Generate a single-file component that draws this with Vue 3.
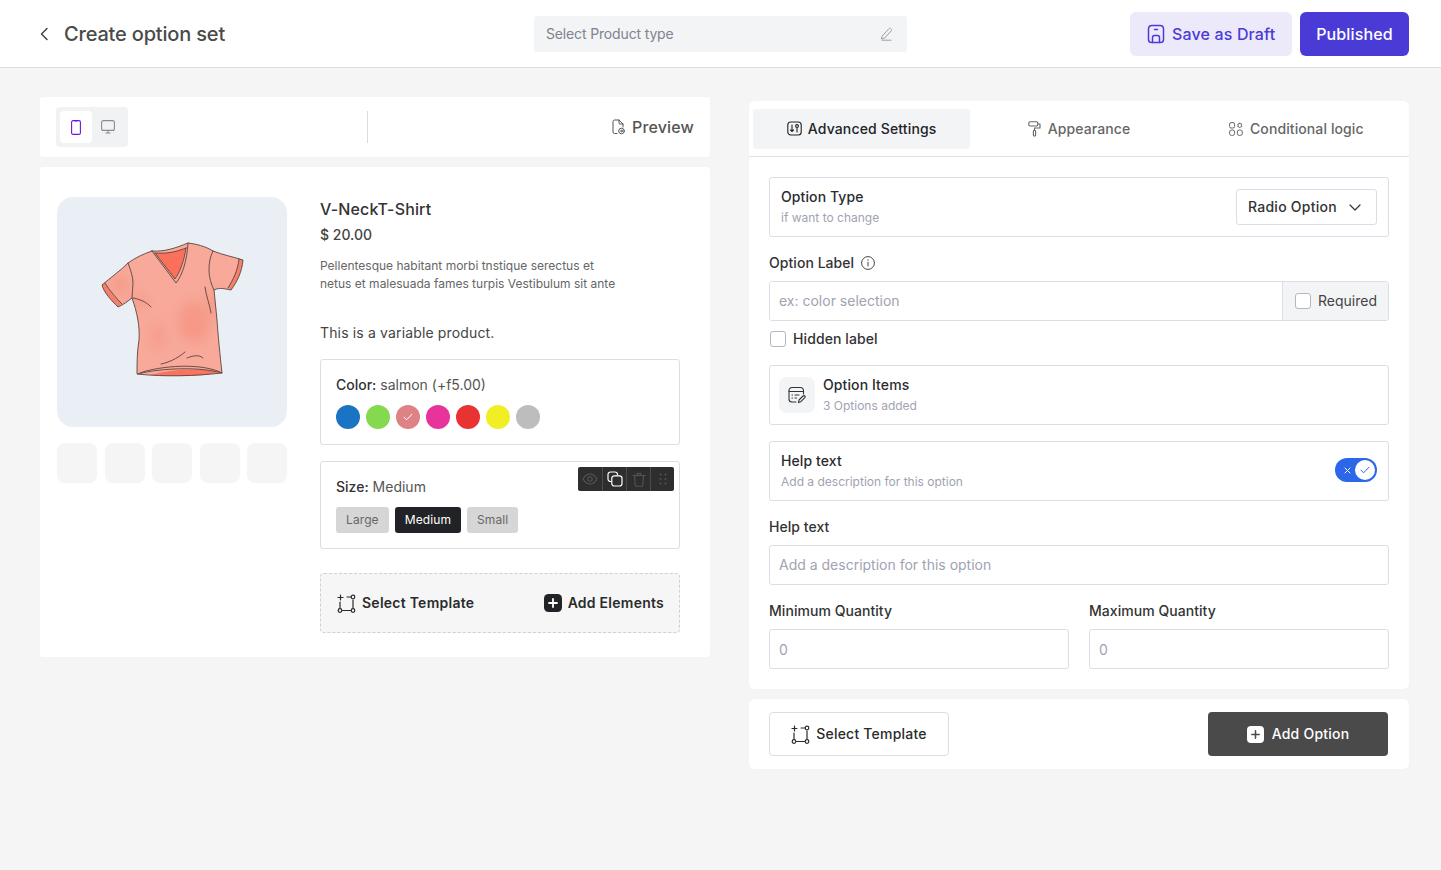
<script setup>
const swatches = [
  { color: '#1b73c4' },
  { color: '#85d94f' },
  { color: '#df8286', selected: true },
  { color: '#e8349a' },
  { color: '#e93232' },
  { color: '#f2ee26' },
  { color: '#bdbdbd' }
]
const sizes = [
  { name: 'Large' },
  { name: 'Medium', active: true },
  { name: 'Small' }
]
const thumbs = [1, 2, 3, 4, 5]
const shirtPath = 'M62 21C53 24 45 28 38 33 30 41 20 48 12 55c2 8 10 16 16 22 5-2 10-6 14-9 5 14 8 28 7 42-2 12-2 23-2 34 28 3 58 2 85-1-2-18-4-38-5-53-1-10-2-20-3-30 6-3 11-1 17 0 6-8 11-18 12-30-9-3-20-5-30-9-8-5-17-7-25-8-12 5-24 9-36 8z'
</script>

<template>
  <div class="page">
    <header class="topbar">
      <div class="title-wrap">
        <svg class="back" width="10" height="14" viewBox="0 0 10 14" fill="none"><path d="M8 1.5 2.5 7 8 12.5" stroke="#444" stroke-width="1.5" stroke-linecap="round" stroke-linejoin="round"/></svg>
        <h1 class="title">Create option set</h1>
      </div>
      <div class="product-type">
        <span>Select Product type</span>
        <svg width="14" height="14" viewBox="0 0 14 14" fill="none" stroke="#9a9cab" stroke-width="1" stroke-linecap="round" stroke-linejoin="round"><path d="M2.2 9.2 9 1.6c.5-.5 1.2-.5 1.700 0l.6.6c.5.5.5 1.100 0 1.600L4.500 11.200l-2.700.6z"/><path d="M2 13.200h9"/></svg>
      </div>
      <div class="top-actions">
        <button class="btn-draft">
          <svg width="18" height="20" viewBox="0 0 18 20" fill="none" stroke="#4b3bd6" stroke-width="1.5" stroke-linecap="round" stroke-linejoin="round"><path d="M5 1.500h8c2 0 3.500 1.500 3.500 3.500v10.500c0 1.700-1.300 3-3 3h-9c-1.700 0-3-1.300-3-3V5c0-2 1.500-3.500 3.500-3.500z"/><path d="M7.500 5.500h3"/><path d="M5.500 18.500v-5c0-1 .8-2 2-2h3c1.200 0 2 1 2 2v5"/></svg>
          Save as Draft
        </button>
        <button class="btn-publish">Published</button>
      </div>
    </header>

    <main class="workspace">
      <section class="left">
        <div class="toolbar">
          <div class="device-half">
            <div class="devices">
              <span class="device active">
                <svg width="10" height="15" viewBox="0 0 10 15" fill="none"><rect x=".6" y=".6" width="8.800" height="13.800" rx="1.500" stroke="#6a14e0" stroke-width="1.100"/><path d="M3.800 1h2.400" stroke="#6a14e0" stroke-width="1"/></svg>
              </span>
              <span class="device">
                <svg width="14" height="14" viewBox="0 0 14 14" fill="none" stroke="#8b8b8b" stroke-width="1.100"><rect x=".6" y=".6" width="12.800" height="9.800" rx="2"/><path d="M7 10.500v2.500M4.500 13h5"/></svg>
              </span>
            </div>
          </div>
          <div class="preview">
            <svg width="15" height="16" viewBox="0 0 15 16" fill="none" stroke="#555" stroke-width="1" stroke-linecap="round" stroke-linejoin="round"><path d="M6 14.500H3.500A1.500 1.500 0 0 1 2 13V2.500A1.500 1.500 0 0 1 3.500 1H8l4 4v3"/><path d="M8 1v3a1 1 0 0 0 1 1h3"/><circle cx="10.500" cy="12" r="2.800"/><circle cx="10.500" cy="12" r=".8"/></svg>
            Preview
          </div>
        </div>

        <div class="product-card">
          <div class="gallery">
            <div class="main-image">
              <svg class="shirt" width="165" height="160" viewBox="0 0 165 160">
                <defs>
                  <filter id="soft" x="-60%" y="-60%" width="220%" height="220%"><feGaussianBlur stdDeviation="6"/></filter>
                  <clipPath id="body-clip"><path :d="shirtPath"/></clipPath>
                </defs>
                <path :d="shirtPath" fill="#f8a999"/>
                <g clip-path="url(#body-clip)">
                  <g filter="url(#soft)" fill="#f48a79" opacity=".55">
                    <ellipse cx="104" cy="92" rx="15" ry="20"/>
                    <ellipse cx="68" cy="106" rx="5" ry="12"/>
                    <ellipse cx="124" cy="72" rx="5" ry="14"/>
                    <ellipse cx="48" cy="72" rx="8" ry="6"/>
                    <ellipse cx="30" cy="55" rx="8" ry="8"/>
                  </g>
                  <path d="M12 55c2 8 10 16 16 22l4-3c-7-6-13-14-17-21z" fill="#f47f6b"/>
                  <path d="M153 30c-1 12-6 22-12 30l-3-2c5-8 10-18 11-29z" fill="#f47f6b"/>
                </g>
                <path d="M65 23c11 1 21-1 31-5l-5 20-6 11z" fill="#fb705a"/>
                <path d="M60 145c24-6 48-7 70-3-13 3-24 4-36 4-12 0-23 0-34-1z" fill="#f7745e"/>
                <g fill="none" stroke="#5a4440" stroke-width=".9" stroke-linecap="round" stroke-linejoin="round">
                  <path :d="shirtPath"/>
                  <path d="M62 21 86 53c6-7 11-22 12-40M65 23l20 26c5-7 9-18 11-31M65 23c11 1 21-1 31-5"/>
                  <path d="M38 33c3 8 5 14 5 20 0 5-1 10-1 15M15 53c5 8 11 15 17 21M123 21c-3 6-4 12-4 19 0 7 2 14 5 20M149 29c-1 11-6 21-11 29"/>
                  <path d="M43 68c6 1 14 4 18 9M115 57c1 9 5 18 6 26M71 134c6-1 16-5 24-12M97 128c5-2 12-4 16 0M48 144c12-4 56-9 84-1M50 143c12-5 55-12 80-1"/>
                </g>
              </svg>
            </div>
            <div class="thumbs">
              <span v-for="t in thumbs" :key="t" class="thumb"></span>
            </div>
          </div>

          <div class="details">
            <h2 class="product-name">V-NeckT-Shirt</h2>
            <p class="price">$ 20.00</p>
            <p class="desc">Pellentesque habitant morbi tnstique serectus et<br>netus et malesuada fames turpis Vestibulum sit ante</p>
            <p class="variable">This is a variable product.</p>

            <div class="option-box color-box">
              <p class="option-title"><b>Color:</b> salmon (+f5.00)</p>
              <div class="swatches">
                <span v-for="s in swatches" :key="s.color" class="swatch" :style="{ background: s.color }">
                  <svg v-if="s.selected" width="10" height="8" viewBox="0 0 10 8" fill="none"><path d="M1 4.200 3.600 6.800 9 1.200" stroke="#fff" stroke-width="1" stroke-linecap="round" stroke-linejoin="round"/></svg>
                </span>
              </div>
            </div>

            <div class="option-box size-box">
              <div class="float-tools">
                <span class="tool">
                  <svg width="16" height="12" viewBox="0 0 16 12" fill="none" stroke="#555" stroke-width="1.100"><path d="M1 6c2-3.400 4.400-5 7-5s5 1.600 7 5c-2 3.400-4.400 5-7 5S3 9.400 1 6z"/><circle cx="8" cy="6" r="2.200"/></svg>
                </span>
                <span class="tool">
                  <svg width="16" height="16" viewBox="0 0 16 16" fill="none" stroke="#fff" stroke-width="1.200"><path d="M10.500 4.500V3.500a2.500 2.500 0 0 0-2.500-2.500H3.500A2.500 2.500 0 0 0 1 3.500V8a2.500 2.500 0 0 0 2.500 2.500h1"/><rect x="4.800" y="4.800" width="10.200" height="10.200" rx="2.500"/></svg>
                </span>
                <span class="tool">
                  <svg width="14" height="15" viewBox="0 0 14 15" fill="none" stroke="#555" stroke-width="1.100" stroke-linecap="round" stroke-linejoin="round"><path d="M1 3.500h12M5 3.500V1.500h4v2M2.500 3.500l.7 9.500c0 .8.600 1.200 1.300 1.200h5c.7 0 1.300-.4 1.300-1.200l.7-9.500"/></svg>
                </span>
                <span class="tool">
                  <svg width="8" height="12" viewBox="0 0 8 12" fill="#555"><circle cx="1.500" cy="1.500" r="1"/><circle cx="6.500" cy="1.500" r="1"/><circle cx="1.500" cy="6" r="1"/><circle cx="6.500" cy="6" r="1"/><circle cx="1.500" cy="10.500" r="1"/><circle cx="6.500" cy="10.500" r="1"/></svg>
                </span>
              </div>
              <p class="option-title"><b>Size:</b> Medium</p>
              <div class="chips">
                <span v-for="c in sizes" :key="c.name" class="chip" :class="{ active: c.active }">{{ c.name }}</span>
              </div>
            </div>

            <div class="dashed">
              <span class="dash-item">
                <svg width="19" height="19" viewBox="0 0 19 19" fill="none" stroke="#2b2b2b" stroke-width="1.200" stroke-linecap="round"><path d="M1 3.500h5M3.500 1v5M3 8v6M5.500 16.500h8.500M16 6v8M10 3h4"/><circle cx="16" cy="3" r="1.800"/><circle cx="3" cy="16.500" r="1.800"/><circle cx="16" cy="16.500" r="1.800"/></svg>
                <span class="nudge">Select Template</span>
              </span>
              <span class="dash-item">
                <svg width="18" height="18" viewBox="0 0 18 18"><rect width="18" height="18" rx="4.500" fill="#222326"/><path d="M9 5v8M5 9h8" stroke="#fff" stroke-width="1.800" stroke-linecap="round"/></svg>
                <span class="nudge">Add Elements</span>
              </span>
            </div>
          </div>
        </div>
      </section>

      <section class="right">
        <div class="settings-card">
          <nav class="tabs">
            <div class="tab active">
              <svg width="15" height="15" viewBox="0 0 15 15" fill="none" stroke="#222" stroke-width="1.100" stroke-linecap="round"><rect x=".8" y="1" width="13.400" height="13" rx="3"/><path d="M5 4v6.500M3.500 9l1.500 1.500L6.500 9"/><path d="M10 11V7"/><circle cx="10" cy="5" r="1.400"/></svg>
              Advanced Settings
            </div>
            <div class="tab">
              <svg width="13" height="16" viewBox="0 0 13 16" fill="none" stroke="#666" stroke-width="1.100" stroke-linejoin="round"><rect x=".8" y=".8" width="9" height="4.200" rx="1.200"/><path d="M9.800 3H12v4H6.500v2.500"/><rect x="5.400" y="9.500" width="2.200" height="5.500" rx=".8"/></svg>
              Appearance
            </div>
            <div class="tab">
              <svg width="14" height="14" viewBox="0 0 14 14" fill="none" stroke="#666" stroke-width="1"><rect x=".6" y=".6" width="5" height="5.400" rx="1.500"/><path d="M10.800.8l.7 1.200 1.300.1-.4 1.300.5 1.200-1.300.2-.8 1-.8-1-1.300-.2.500-1.200-.4-1.300 1.300-.1z"/><rect x=".6" y="8" width="5" height="5.400" rx="2"/><rect x="8.300" y="8" width="5" height="5.400" rx="2"/></svg>
              Conditional logic
            </div>
          </nav>

          <div class="form">
            <div class="row-box type-box">
              <div class="row-text">
                <p class="row-title">Option Type</p>
                <p class="row-sub">if want to change</p>
              </div>
              <div class="select">
                <span class="nudge">Radio Option</span>
                <svg width="12" height="7" viewBox="0 0 12 7" fill="none"><path d="M1 1l5 5 5-5" stroke="#333" stroke-width="1.200" stroke-linecap="round" stroke-linejoin="round"/></svg>
              </div>
            </div>

            <label class="field-label label-first">
              Option Label
              <svg width="14" height="14" viewBox="0 0 14 14" fill="none" stroke="#444" stroke-width="1"><circle cx="7" cy="7" r="6.400"/><path d="M7 6.200V10" stroke-linecap="round"/><circle cx="7" cy="4" r=".7" fill="#444" stroke="none"/></svg>
            </label>
            <div class="label-input">
              <input class="plain-input" placeholder="ex: color selection">
              <div class="required"><span class="check"></span><span class="nudge">Required</span></div>
            </div>
            <div class="hidden-label"><span class="check"></span><span class="nudge">Hidden label</span></div>

            <div class="row-box items-box">
              <span class="items-icon">
                <svg width="18" height="18" viewBox="0 0 18 18" fill="none" stroke="#333" stroke-width="1.100" stroke-linecap="round" stroke-linejoin="round"><path d="M8 16H4a3 3 0 0 1-3-3V4.500a3 3 0 0 1 3-3h8.500a3 3 0 0 1 3 3V8"/><path d="M1 5.500h14.500M4 9h.5M7 9h4M4 12h.5M7 12h1.500"/><path d="M10.500 16.500l.5-2.500 4-4c.6-.5 1.300-.5 1.800 0s.5 1.200 0 1.700l-4 4z"/></svg>
              </span>
              <div class="row-text">
                <p class="row-title">Option Items</p>
                <p class="row-sub">3 Options added</p>
              </div>
            </div>

            <div class="row-box help-box">
              <div class="row-text">
                <p class="row-title">Help text</p>
                <p class="row-sub">Add a description for this option</p>
              </div>
              <span class="toggle">
                <svg class="toggle-x" width="7" height="7" viewBox="0 0 7 7" fill="none"><path d="M1 1l5 5M6 1 1 6" stroke="#fff" stroke-width="1" stroke-linecap="round"/></svg>
                <span class="knob">
                  <svg width="10" height="8" viewBox="0 0 10 8" fill="none"><path d="M1 4.200 3.600 6.800 9 1.200" stroke="#2b67e8" stroke-width="1" stroke-linecap="round" stroke-linejoin="round"/></svg>
                </span>
              </span>
            </div>

            <label class="field-label label-help">Help text</label>
            <input class="text-input" placeholder="Add a description for this option">

            <div class="qty-grid">
              <div>
                <label class="field-label">Minimum Quantity</label>
                <input class="text-input qty-input" placeholder="0">
              </div>
              <div>
                <label class="field-label">Maximum Quantity</label>
                <input class="text-input qty-input" placeholder="0">
              </div>
            </div>
          </div>
        </div>

        <div class="footer-card">
          <button class="btn-template">
            <svg width="19" height="19" viewBox="0 0 19 19" fill="none" stroke="#2b2b2b" stroke-width="1.200" stroke-linecap="round"><path d="M1 3.500h5M3.500 1v5M3 8v6M5.500 16.500h8.500M16 6v8M10 3h4"/><circle cx="16" cy="3" r="1.800"/><circle cx="3" cy="16.500" r="1.800"/><circle cx="16" cy="16.500" r="1.800"/></svg>
            <span class="nudge">Select Template</span>
          </button>
          <button class="btn-add">
            <svg width="17" height="17" viewBox="0 0 17 17"><rect width="17" height="17" rx="4" fill="#fff"/><path d="M8.500 4.800v7.400M4.800 8.500h7.400" stroke="#4a4a4a" stroke-width="1.500" stroke-linecap="round"/></svg>
            <span class="nudge">Add Option</span>
          </button>
        </div>
      </section>
    </main>
  </div>
</template>

<style scoped>
* { box-sizing: border-box; }
p, h1, h2 { margin: 0; font-weight: inherit; }
button { font-family: inherit; border: 0; cursor: pointer; }

.page {
  min-height: 870px;
  background: #f5f5f6;
  font-family: Inter, "Liberation Sans", sans-serif;
  color: #222326;
}

.topbar {
  height: 68px;
  background: #fff;
  border-bottom: 1px solid #dcdde2;
  display: grid;
  grid-template-columns: 534px 373px 1fr;
  align-items: center;
  padding-right: 32px;
}
.title-wrap { display: flex; align-items: center; padding-left: 39px; gap: 15px; }
.back { flex: none; }
.title { font-size: 20px; font-weight: 500; color: #4a4a4a; line-height: 24px; letter-spacing: -.18px; }
.product-type {
  height: 36px;
  background: #f3f4f5;
  border-radius: 3px;
  padding: 0 13px 0 12px;
  display: flex;
  align-items: center;
  justify-content: space-between;
  font-size: 14px;
  color: #80838f;
  letter-spacing: -.15px;
}
.top-actions { display: flex; justify-content: flex-end; gap: 8px; }
.btn-draft, .btn-publish {
  height: 44px;
  border-radius: 6px;
  font-size: 16px;
  font-weight: 500;
  display: flex;
  align-items: center;
  letter-spacing: .15px;
}
.btn-draft { width: 162px; background: #ece9fb; color: #4b3bd6; gap: 7px; padding-left: 17px; }
.btn-publish { width: 109px; background: #4b3bd6; color: #fff; justify-content: center; }

.workspace {
  display: grid;
  grid-template-columns: 670px 660px;
  column-gap: 39px;
  padding: 29px 32px 0 40px;
}

.toolbar {
  height: 60px;
  background: #fff;
  border-radius: 3px;
  display: flex;
  align-items: center;
  padding: 0 16px 0 16px;
}
.device-half {
  width: 312px;
  height: 32px;
  border-right: 1px solid #d9dae2;
  display: flex;
  align-items: center;
  flex: none;
}
.devices {
  background: #f1f2f4;
  border-radius: 4px;
  width: 72px;
  height: 40px;
  padding: 4px;
  display: flex;
  flex: none;
}
.device { width: 32px; height: 32px; display: flex; align-items: center; justify-content: center; border-radius: 4px; }
.device.active { background: #fff; }
.preview {
  margin-left: auto;
  display: flex;
  align-items: center;
  gap: 6px;
  font-size: 16px;
  font-weight: 500;
  color: #555;
  letter-spacing: .15px;
}

.product-card {
  margin-top: 10px;
  height: 490px;
  background: #fff;
  border-radius: 3px;
  padding: 30px 30px 0 17px;
  display: flex;
  gap: 33px;
}
.gallery { width: 230px; flex: none; }
.main-image {
  height: 230px;
  background: #e9eff4;
  border-radius: 16px;
  display: flex;
  align-items: center;
  justify-content: center;
  padding-bottom: 4px;
}
.thumbs { display: flex; justify-content: space-between; margin-top: 16px; }
.thumb { width: 40px; height: 40px; background: #f5f5f6; border-radius: 8px; }

.details { flex: 1; min-width: 0; }
.product-name { font-size: 16px; font-weight: 500; line-height: 24px; color: #333; letter-spacing: .15px; }
.price { margin-top: 4px; font-size: 14px; line-height: 20px; font-weight: 500; color: #444; }
.desc { margin-top: 12px; font-size: 12px; line-height: 18px; color: #666; }
.variable { margin-top: 30px; font-size: 14px; line-height: 20px; color: #444; letter-spacing: .15px; }

.option-box { border: 1px solid #dcdde6; border-radius: 3px; position: relative; padding: 0 15px; }
.color-box { margin-top: 16px; height: 86px; padding-top: 15px; }
.size-box { margin-top: 16px; height: 88px; padding-top: 15px; }
.option-title { font-size: 14px; line-height: 20px; color: #555; }
.option-title b { font-weight: 500; color: #333; }
.swatches { display: flex; gap: 6px; margin-top: 10px; }
.swatch { width: 24px; height: 24px; border-radius: 50%; display: flex; align-items: center; justify-content: center; }
.chips { display: flex; gap: 6px; margin-top: 10px; }
.chip {
  height: 26px;
  padding: 0 10px 2px;
  border-radius: 3px;
  background: #d6d6d6;
  color: #666;
  font-size: 12px;
  letter-spacing: .1px;
  display: flex;
  align-items: center;
}
.chip.active { background: #222326; color: #fff; }
.float-tools {
  position: absolute;
  top: 5px;
  right: 5px;
  display: flex;
  background: #2e2e2e;
  border-radius: 2px;
  height: 24px;
}
.tool {
  width: 24px;
  height: 24px;
  display: flex;
  align-items: center;
  justify-content: center;
  border-left: 1px solid #4b4b4b;
}
.tool:first-child { border-left: 0; }

.dashed {
  margin-top: 24px;
  height: 60px;
  background: #f6f6f6;
  border: 1px dashed #d0d0d4;
  border-radius: 4px;
  display: flex;
  align-items: center;
  justify-content: space-between;
  padding: 0 15px 0 16px;
}
.dash-item { display: flex; align-items: center; gap: 6px; font-size: 14px; font-weight: 600; color: #2b2b2b; letter-spacing: .25px; }

.right { padding-top: 4px; }
.settings-card { background: #fff; border-radius: 6px; height: 588px; }
.tabs {
  height: 56px;
  border-bottom: 1px solid #dfe0e6;
  padding: 8px 4px 7px;
  display: grid;
  grid-template-columns: repeat(3, 1fr);
}
.tab {
  display: flex;
  align-items: center;
  justify-content: center;
  gap: 7px;
  padding-bottom: 1px;
  font-size: 14px;
  font-weight: 500;
  color: #666;
  border-radius: 3px;
  letter-spacing: .1px;
}
.tab.active { background: #f3f4f6; color: #222326; gap: 6px; letter-spacing: .15px; }

.form { padding: 20px; }
.row-box { border: 1px solid #dcdde6; border-radius: 3px; display: flex; align-items: center; height: 60px; padding: 0 11px; }
.row-text { padding-bottom: 1px; }
.row-title { font-size: 14px; font-weight: 500; line-height: 20px; color: #2b2b2e; letter-spacing: .1px; }
.row-sub { font-size: 12px; line-height: 16px; margin-top: 3px; color: #a0a3b1; }
.nudge { margin-bottom: 2px; }
.type-box, .help-box { justify-content: space-between; }
.select {
  width: 141px;
  height: 36px;
  border: 1px solid #dcdde6;
  border-radius: 3px;
  display: flex;
  align-items: center;
  justify-content: space-between;
  padding: 0 15px 0 11px;
  font-size: 14px;
  font-weight: 500;
  color: #333;
  letter-spacing: .25px;
}
.field-label {
  display: flex;
  align-items: center;
  gap: 7px;
  font-size: 14px;
  font-weight: 500;
  line-height: 20px;
  color: #333;
  margin-bottom: 8px;
  letter-spacing: .05px;
}
.label-first { margin-top: 16px; }
.label-input { display: flex; height: 40px; border: 1px solid #dcdde6; border-radius: 3px; overflow: hidden; }
.plain-input {
  flex: 1;
  min-width: 0;
  border: 0;
  outline: 0;
  padding: 0 9px 2px;
  font: 14px Inter, "Liberation Sans", sans-serif;
}
input::placeholder { color: #a0a3b1; opacity: 1; }
.required {
  width: 106px;
  flex: none;
  background: #f3f4f6;
  border-left: 1px solid #dcdde6;
  display: flex;
  align-items: center;
  gap: 7px;
  padding-left: 12px;
  font-size: 14px;
  color: #444;
}
.check { width: 16px; height: 16px; border: 1.5px solid #b4b6c2; border-radius: 3px; background: #fff; flex: none; }
.hidden-label {
  display: flex;
  align-items: center;
  gap: 7px;
  margin-top: 8px;
  padding-left: 1px;
  height: 20px;
  font-size: 14px;
  font-weight: 500;
  color: #333;
  letter-spacing: .1px;
}
.items-box { margin-top: 16px; padding: 0 9px; gap: 8px; }
.items-icon { width: 36px; height: 36px; background: #f3f4f6; border-radius: 8px; display: flex; align-items: center; justify-content: center; flex: none; }
.help-box { margin-top: 16px; }
.toggle {
  width: 42px;
  height: 24px;
  margin-bottom: 2px;
  border-radius: 12px;
  background: #2b67e8;
  display: flex;
  align-items: center;
  justify-content: space-between;
  padding: 0 2px 0 9px;
}
.knob { width: 20px; height: 20px; border-radius: 50%; background: #fff; display: flex; align-items: center; justify-content: center; }
.label-help { margin-top: 16px; }
.text-input {
  display: block;
  width: 100%;
  height: 40px;
  border: 1px solid #dcdde6;
  border-radius: 3px;
  outline: 0;
  padding: 0 9px 2px;
  font: 14px Inter, "Liberation Sans", sans-serif;
}
.qty-input { padding-bottom: 0; }
.qty-grid { display: grid; grid-template-columns: 1fr 1fr; column-gap: 20px; margin-top: 16px; }

.footer-card {
  margin-top: 10px;
  height: 70px;
  background: #fff;
  border-radius: 6px;
  display: flex;
  align-items: center;
  justify-content: space-between;
  padding: 0 21px 0 20px;
}
.btn-template, .btn-add {
  width: 180px;
  height: 44px;
  border-radius: 4px;
  display: flex;
  align-items: center;
  justify-content: center;
  font-size: 14px;
  font-weight: 500;
  letter-spacing: .22px;
}
.btn-template { background: #fff; border: 1px solid #dcdde6; color: #2b2b2b; gap: 6px; }
.btn-add { background: #4a4a4a; color: #fff; gap: 8px; }
</style>

<style>
html, body { margin: 0; background: #f5f5f6; }
</style>
